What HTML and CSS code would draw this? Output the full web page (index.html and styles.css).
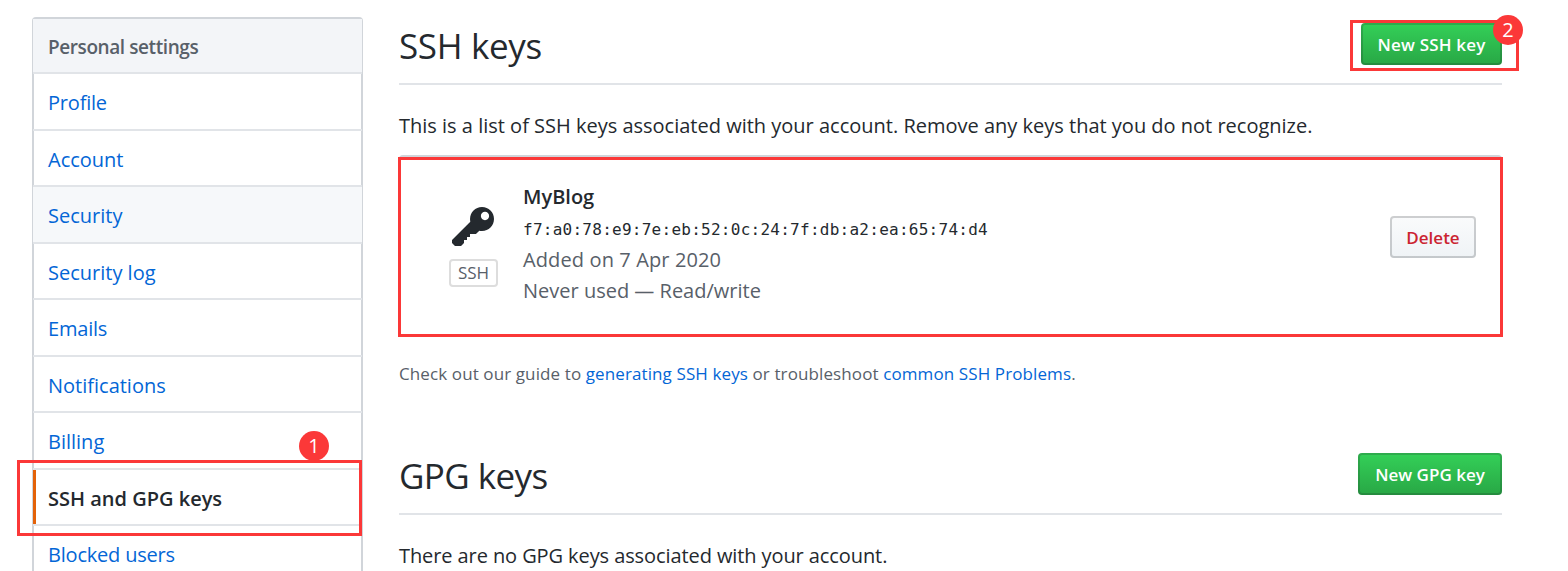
FILE: index.html
```
<!DOCTYPE html>
<html lang="en">
<head>
<meta charset="utf-8">
<title>SSH and GPG keys</title>
<link rel="stylesheet" href="styles.css">
</head>
<body>
<div class="page">
  <nav class="menu">
    <h3 class="menu-heading">Personal settings</h3>
    <a class="menu-item tight">Profile</a>
    <a class="menu-item">Account</a>
    <a class="menu-item hovered">Security</a>
    <a class="menu-item">Security log</a>
    <a class="menu-item tight">Emails</a>
    <a class="menu-item">Notifications</a>
    <a class="menu-item">Billing</a>
    <a class="menu-item selected">SSH and GPG keys</a>
    <a class="menu-item tight">Blocked users</a>
  </nav>
  <main class="content">
    <header class="subhead">
      <h2>SSH keys</h2>
      <button class="btn btn-primary btn-ssh">New SSH key</button>
    </header>
    <p class="intro">This is a list of SSH keys associated with your account. Remove any keys that you do not recognize.</p>
    <section class="key-list">
      <div class="key-type">
        <svg class="key-icon" viewBox="0 0 14 16" width="42" height="48"><path fill-rule="evenodd" d="M12.83 2.17C12.08 1.42 11.14 1.03 10 1c-1.13.03-2.08.42-2.83 1.17S6.04 3.86 6.01 5c0 .3.03.59.09.89L0 12v1l1 1h2l1-1v-1h1v-1h1v-1h2l1.09-1.11c.3.08.59.11.91.11 1.14-.03 2.08-.42 2.83-1.17S13.97 6.14 14 5c-.03-1.14-.42-2.08-1.17-2.83zM11 5.38c-.77 0-1.38-.61-1.38-1.38 0-.77.61-1.38 1.38-1.38.77 0 1.38.61 1.38 1.38 0 .77-.61 1.38-1.38 1.38z"/></svg>
        <span class="key-label">SSH</span>
      </div>
      <div class="key-info">
        <strong class="key-title">MyBlog</strong>
        <code class="fingerprint">f7:a0:78:e9:7e:eb:52:0c:24:7f:db:a2:ea:65:74:d4</code>
        <span class="key-meta added">Added on 7 Apr 2020</span>
        <span class="key-meta">Never used — Read/write</span>
      </div>
      <button class="btn btn-danger">Delete</button>
    </section>
    <p class="guide">Check out our guide to <a>generating SSH keys</a> or troubleshoot <a>common SSH Problems</a>.</p>
    <header class="subhead gpg">
      <h2>GPG keys</h2>
      <button class="btn btn-primary btn-gpg">New GPG key</button>
    </header>
    <p class="empty">There are no GPG keys associated with your account.</p>
  </main>
  <div class="mark mark-menu"></div>
  <div class="mark mark-new"></div>
  <div class="mark mark-key"></div>
  <div class="badge badge-1">1</div>
  <div class="badge badge-2">2</div>
</div>
</body>
</html>
```
FILE: styles.css
```
* { box-sizing: border-box; }
body {
  margin: 0;
  background: #fff;
  color: #24292e;
  font-family: "Open Sans", "Noto Sans", sans-serif;
  font-size: 20px;
  line-height: 30px;
}
h2, h3, p { margin: 0; font-weight: 400; }
.page {
  position: relative;
  display: flex;
  align-items: flex-start;
  gap: 36px;
  width: 1568px;
  height: 571px;
  padding: 17px 66px 0 32px;
  overflow: hidden;
}
.menu {
  width: 331px;
  flex: none;
  border: 1px solid #d1d5da;
  border-top-width: 2px;
  border-radius: 4px 4px 0 0;
}
.menu-heading, .menu-item {
  display: flex;
  align-items: center;
  height: 56px;
  padding: 3px 0 0 15px;
  border-bottom: 2px solid #e1e4e8;
  white-space: nowrap;
}
.menu-heading {
  height: 55px;
  background: #f3f5f8;
  color: #586069;
  font-size: 19px;
  font-weight: 600;
  letter-spacing: -.42px;
}
.menu-item {
  color: #0366d6;
  box-shadow: inset 1px 0 #d1d5da, inset -1px 0 #d1d5da;
}
.menu-item:nth-child(even) { height: 57px; padding-top: 2px; }
.menu-item.tight { letter-spacing: -.2px; }
.menu-item.hovered { background: #f6f8fa; box-shadow: none; }
.menu-item.selected { color: #24292e; font-weight: 600; box-shadow: inset 3px 0 #e36209; }
.content { flex: 1; min-width: 0; }
.subhead {
  display: flex;
  justify-content: space-between;
  align-items: flex-start;
  height: 68px;
  padding-top: 6px;
  border-bottom: 2px solid #e1e4e8;
}
.subhead h2 { font-size: 35px; line-height: 46px; letter-spacing: -.35px; }
.btn {
  display: flex;
  align-items: center;
  justify-content: center;
  height: 42px;
  padding: 2px 0 0;
  border: 2px solid;
  border-radius: 4px;
  font: 600 17px/30px "Open Sans", "Noto Sans", sans-serif;
  white-space: nowrap;
}
.btn-primary {
  color: #fff;
  background: linear-gradient(#34d058, #28a745) border-box;
  border-color: rgba(27, 31, 35, .2);
}
.btn-ssh { width: 141px; letter-spacing: .2px; }
.btn-gpg { width: 144px; }
.intro { height: 70px; padding-top: 26px; white-space: nowrap; }
.key-list {
  display: flex;
  height: 180px;
  border-top: 2px solid #d1d5da;
  border-radius: 4px;
}
.key-type {
  display: flex;
  flex-direction: column;
  align-items: center;
  width: 49px;
  margin: 47px 25px 0 50px;
}
.key-icon { display: block; margin-right: 2px; fill: #24292e; }
.key-label {
  width: 49px;
  height: 28px;
  margin-top: 7px;
  border: 2px solid #ddd;
  border-radius: 4px;
  color: #586069;
  font-size: 17px;
  line-height: 24px;
  text-align: center;
}
.key-info { display: flex; flex-direction: column; padding-top: 24px; white-space: nowrap; }
.key-title { font-weight: 600; line-height: 31px; }
.fingerprint { height: 32px; font: 16px/35px "DejaVu Sans Mono", monospace; letter-spacing: .26px; }
.key-meta { color: #586069; line-height: 31px; }
.added { letter-spacing: .12px; }
.btn-danger {
  width: 86px;
  margin: 59px 26px 0 auto;
  color: #cb2431;
  background: linear-gradient(#fafbfc, #eff3f6) border-box;
  border-color: rgba(27, 31, 35, .2);
}
.guide { padding-top: 24px; color: #586069; font-size: 17px; line-height: 30px; letter-spacing: .105px; white-space: nowrap; }
.guide a { color: #0366d6; }
.gpg { margin-top: 58px; }
.gpg h2 { letter-spacing: -.6px; }
.empty { padding-top: 26px; letter-spacing: -.09px; white-space: nowrap; }
.mark { position: absolute; border: 3px solid #fb3838; }
.mark-menu { left: 17px; top: 460px; width: 345px; height: 76px; }
.mark-new { left: 1350px; top: 20px; width: 169px; height: 51px; }
.mark-key { left: 398px; top: 157px; width: 1105px; height: 180px; }
.badge {
  position: absolute;
  width: 30px;
  height: 30px;
  border-radius: 50%;
  background: #fb3838;
  color: #fff;
  font-size: 20px;
  line-height: 29px;
  text-align: center;
}
.badge-1 { left: 299px; top: 431px; }
.badge-2 { left: 1493px; top: 15px; }
```
